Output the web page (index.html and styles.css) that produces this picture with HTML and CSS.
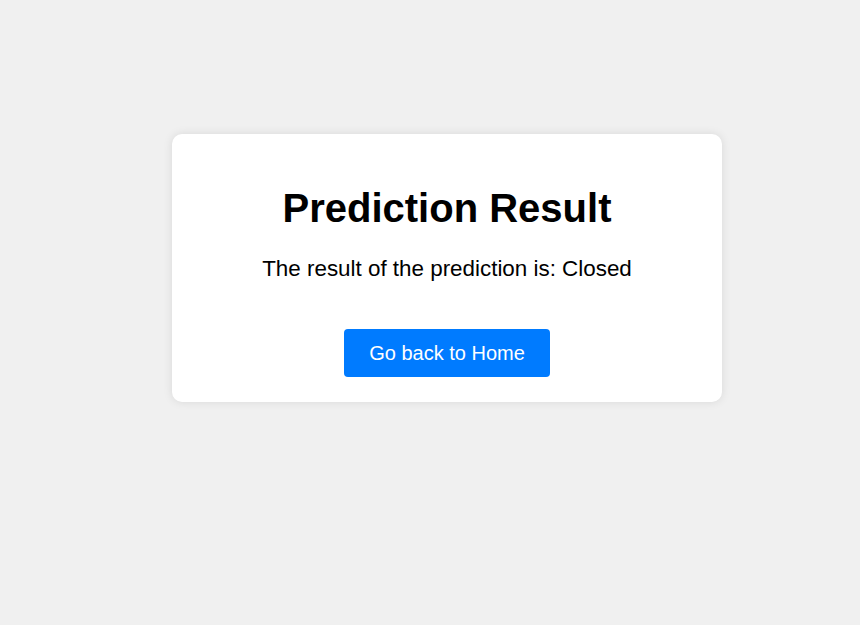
FILE: index.html
```html
<!DOCTYPE html>
<html>
<head>
<meta charset="utf-8">
<title>Prediction Result</title>
<link rel="stylesheet" href="styles.css">
</head>
<body>
<div class="card">
  <h1 class="title">Prediction Result</h1>
  <p class="result">The result of the prediction is: Closed</p>
  <div class="actions">
    <a class="btn" href="#">Go back to Home</a>
  </div>
</div>
</body>
</html>
```
FILE: styles.css
```css
html, body {
  margin: 0;
  padding: 0;
}
body {
  background: #f0f0f0;
  font-family: "Liberation Sans", Arial, sans-serif;
  padding: 134px 0 0 34px;
  min-height: 100vh;
  box-sizing: border-box;
}
.card {
  width: 550px;
  box-sizing: border-box;
  margin: 0 auto;
  background: #fff;
  border-radius: 10px;
  box-shadow: 0 0 10px rgba(0, 0, 0, 0.1);
  padding: 24px 30px 25px;
  text-align: center;
}
.title {
  margin: 27px 0 0;
  font-size: 40px;
  line-height: 46px;
  font-weight: bold;
  color: #000;
}
.result {
  margin: 25px 0 0;
  font-size: 22.4px;
  line-height: 26px;
  color: #000;
}
.actions {
  margin-top: 47px;
}
.btn {
  display: inline-block;
  background: #007bff;
  color: #fff;
  text-decoration: none;
  font-size: 20px;
  line-height: 22px;
  padding: 13px 25px;
  border-radius: 4px;
}
```
